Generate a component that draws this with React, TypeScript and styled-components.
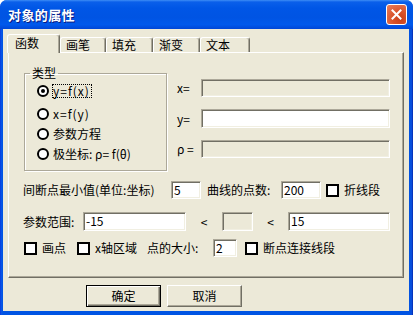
import React from "react";
import styled, { createGlobalStyle } from "styled-components";

const Global = createGlobalStyle`
  html, body { margin: 0; padding: 0; background: #ffffff; }
  body { font-family: "Noto Sans CJK SC", "Noto Sans", sans-serif; font-size: 12px; color: #000; }
  * { box-sizing: border-box; }
`;

const FONT = `"Noto Sans CJK SC", "Noto Sans", sans-serif`;

const Window = styled.div`
  width: 413px;
  height: 315px;
  display: flex;
  flex-direction: column;
  background: linear-gradient(to right, #0831d9 0, #0a56e8 1px, #0054e3 3px, #0054e3 calc(100% - 4px), #0a4bd8 calc(100% - 1px), #001ea0 100%);
  border-radius: 7px 7px 0 0;
  overflow: hidden;
`;

const TitleBar = styled.div`
  height: 29px;
  flex: none;
  display: flex;
  align-items: center;
  justify-content: space-between;
  padding: 0 6px 0 8px;
  background: linear-gradient(#3d8df5 0, #0a5fea 2px, #0056e6 8px, #0054e3 60%, #0059ec 85%, #0046d6 100%);
`;

const Title = styled.div`
  font-family: ${FONT};
  font-weight: bold;
  font-size: 13px;
  line-height: 16px;
  color: #ffffff;
  text-shadow: 1px 1px 0 #0a1a80;
  letter-spacing: 0.4px;
`;

const CloseButton = styled.div`
  width: 21px;
  height: 21px;
  border: 1px solid #ffffff;
  border-radius: 3px;
  background: radial-gradient(circle at 70% 75%, #c8401a 0, #d9532a 40%, #e9805f 100%);
  display: flex;
  align-items: center;
  justify-content: center;
`;

const Body = styled.div`
  flex: 1;
  margin: 0 4px 4px 3px;
  background: #ece9d8;
  display: flex;
  flex-direction: column;
  padding: 5px 0 0 4px;
`;

const TabStrip = styled.div`
  display: flex;
  align-items: flex-end;
  height: 18px;
  position: relative;
  z-index: 1;
`;

const Tab = styled.div<{ $w: number; $active?: boolean }>`
  width: ${(p) => p.$w}px;
  height: ${(p) => (p.$active ? 19 : 15)}px;
  margin-bottom: ${(p) => (p.$active ? -1 : 0)}px;
  padding: ${(p) => (p.$active ? "1px 0 0 7px" : "0 0 0 5px")};
  background: #ece9d8;
  border-top: 1px solid #ffffff;
  border-left: 1px solid #ffffff;
  border-right: 1px solid #716f64;
  box-shadow: inset -1px 0 0 #aca899;
  border-radius: 3px 3px 0 0;
  font-family: ${FONT};
  font-size: 12px;
  line-height: 14px;
  white-space: nowrap;
`;

const Panel = styled.div`
  margin-left: 1px;
  width: 396px;
  height: 226px;
  flex: none;
  border-top: 1px solid #ffffff;
  border-left: 1px solid #ffffff;
  border-right: 1px solid #716f64;
  border-bottom: 1px solid #716f64;
  box-shadow: inset -1px -1px 0 #aca899;
  display: flex;
  flex-direction: column;
`;

const TopSection = styled.div`
  display: flex;
  align-items: flex-start;
  margin: 13px 0 0 15px;
`;

const Group = styled.fieldset`
  width: 143px;
  height: 105px;
  margin: 0;
  padding: 4px 0 0 5px;
  border: 1px solid #aca899;
  box-shadow: inset 1px 1px 0 #ffffff, 1px 1px 0 #ffffff;
  display: flex;
  flex-direction: column;
`;

const Legend = styled.legend`
  padding: 0 2px;
  margin-left: 0;
  font-family: ${FONT};
  font-size: 12px;
  line-height: 14px;
`;

const RadioRow = styled.div<{ $mb: number }>`
  display: flex;
  align-items: center;
  height: 14px;
  padding-left: 7px;
  margin-bottom: ${(p) => p.$mb}px;
  font-family: ${FONT};
  font-size: 12px;
  line-height: 14px;
  white-space: nowrap;
`;

const Radio = styled.span<{ $checked?: boolean }>`
  width: 12px;
  height: 12px;
  flex: none;
  border-radius: 50%;
  border: 2px solid #000000;
  background: #ffffff;
  margin-right: 3px;
  display: flex;
  align-items: center;
  justify-content: center;
  &::after {
    content: "";
    width: 4px;
    height: 4px;
    border-radius: 50%;
    background: ${(p) => (p.$checked ? "#000000" : "transparent")};
  }
`;

const RadioText = styled.span<{ $focus?: boolean; $wide?: boolean }>`
  border: 1px dotted ${(p) => (p.$focus ? "#000000" : "transparent")};
  padding: 0 1px 0 0;
  line-height: 12px;
  letter-spacing: ${(p) => (p.$wide ? "1px" : "0")};
`;

const Fields = styled.div`
  display: grid;
  grid-template-columns: 24px 189px;
  grid-template-rows: 18px 19px 18px;
  row-gap: 12px;
  margin: 13px 0 0 10px;
  align-items: center;
`;

const FieldLabel = styled.span`
  font-family: ${FONT};
  font-size: 12px;
  line-height: 14px;
  white-space: nowrap;
`;

const Input = styled.div<{ $w?: number; $disabled?: boolean }>`
  width: ${(p) => (p.$w ? `${p.$w}px` : "100%")};
  height: 100%;
  flex: none;
  background: ${(p) => (p.$disabled ? "#ece9d8" : "#ffffff")};
  border-top: 1px solid #aca899;
  border-left: 1px solid #aca899;
  border-right: 1px solid #ffffff;
  border-bottom: 1px solid #ffffff;
  box-shadow: inset 1px 1px 0 #716f64, inset -1px -1px 0 #f1efe2;
  padding: 0 0 0 2px;
  font-family: ${FONT};
  font-size: 12px;
  line-height: 16px;
  white-space: nowrap;
`;

const Rows = styled.div`
  display: flex;
  flex-direction: column;
  padding-left: 14px;
`;

const Row = styled.div<{ $mt: number; $h: number }>`
  display: flex;
  align-items: center;
  height: ${(p) => p.$h}px;
  margin-top: ${(p) => p.$mt}px;
`;

const Cell = styled.span<{ $w?: number; $ml?: number; $center?: boolean }>`
  ${(p) => (p.$w ? `width: ${p.$w}px; flex: none;` : "")}
  margin-left: ${(p) => p.$ml ?? 0}px;
  text-align: ${(p) => (p.$center ? "center" : "left")};
  font-family: ${FONT};
  font-size: 12px;
  line-height: 14px;
  white-space: nowrap;
`;

const Check = styled.span`
  width: 13px;
  height: 13px;
  flex: none;
  border: 2px solid #000000;
  background: #ffffff;
`;

const CheckItem = styled.span<{ $w?: number; $ml?: number }>`
  display: flex;
  align-items: center;
  gap: 5px;
  ${(p) => (p.$w ? `width: ${p.$w}px; flex: none;` : "")}
  margin-left: ${(p) => p.$ml ?? 0}px;
  font-family: ${FONT};
  font-size: 12px;
  line-height: 14px;
  white-space: nowrap;
`;

const ButtonRow = styled.div`
  display: flex;
  gap: 6px;
  margin: 7px 0 0 79px;
`;

const Button = styled.div<{ $default?: boolean }>`
  width: 75px;
  height: 22px;
  display: flex;
  align-items: center;
  justify-content: center;
  background: #ece9d8;
  font-family: ${FONT};
  font-size: 12px;
  line-height: 14px;
  ${(p) =>
    p.$default
      ? `border: 1px solid #000000;
         box-shadow: inset 1px 1px 0 #ffffff, inset -1px -1px 0 #716f64, inset -2px -2px 0 #aca899;`
      : `border-top: 1px solid #ffffff;
         border-left: 1px solid #ffffff;
         border-right: 1px solid #716f64;
         border-bottom: 1px solid #716f64;
         box-shadow: inset -1px -1px 0 #aca899;`}
`;

const tabs = [
  { label: "函数", w: 53 },
  { label: "画笔", w: 46 },
  { label: "填充", w: 47 },
  { label: "渐变", w: 47 },
  { label: "文本", w: 50 },
];

export default function App() {
  return (
    <>
      <Global />
      <Window>
        <TitleBar>
          <Title>对象的属性</Title>
          <CloseButton>
            <svg width="11" height="11" viewBox="0 0 11 11">
              <path d="M1.5 1.5 L9.5 9.5 M9.5 1.5 L1.5 9.5" stroke="#ffffff" strokeWidth="2" strokeLinecap="square" />
            </svg>
          </CloseButton>
        </TitleBar>
        <Body>
          <TabStrip>
            {tabs.map((t, i) => (
              <Tab key={t.label} $w={t.w} $active={i === 0}>
                {t.label}
              </Tab>
            ))}
          </TabStrip>
          <Panel>
            <TopSection>
              <Group>
                <Legend>类型</Legend>
                <RadioRow $mb={9}>
                  <Radio $checked />
                  <RadioText $focus $wide>y=f(x)</RadioText>
                </RadioRow>
                <RadioRow $mb={6}>
                  <Radio />
                  <RadioText $wide>x=f(y)</RadioText>
                </RadioRow>
                <RadioRow $mb={6}>
                  <Radio />
                  <RadioText>参数方程</RadioText>
                </RadioRow>
                <RadioRow $mb={0}>
                  <Radio />
                  <RadioText>极坐标: ρ= f(θ)</RadioText>
                </RadioRow>
              </Group>
              <Fields>
                <FieldLabel>x=</FieldLabel>
                <Input $disabled />
                <FieldLabel>y=</FieldLabel>
                <Input />
                <FieldLabel>ρ =</FieldLabel>
                <Input $disabled />
              </Fields>
            </TopSection>
            <Rows>
              <Row $mt={10} $h={18}>
                <Cell $w={148}>间断点最小值(单位:坐标)</Cell>
                <Input $w={30}>5</Input>
                <Cell $w={74} $ml={6}>曲线的点数:</Cell>
                <Input $w={40}>200</Input>
                <CheckItem $ml={5}>
                  <Check />
                  折线段
                </CheckItem>
              </Row>
              <Row $mt={13} $h={19}>
                <Cell $w={60}>参数范围:</Cell>
                <Input $w={103}>-15</Input>
                <Cell $w={36} $center>&lt;</Cell>
                <Input $w={31} $disabled />
                <Cell $w={35} $center>&lt;</Cell>
                <Input $w={102}>15</Input>
              </Row>
              <Row $mt={8} $h={18}>
                <CheckItem $w={53} $ml={1}>
                  <Check />
                  画点
                </CheckItem>
                <CheckItem $w={70}>
                  <Check />
                  x轴区域
                </CheckItem>
                <Cell $w={66}>点的大小:</Cell>
                <Input $w={24}>2</Input>
                <CheckItem $ml={8}>
                  <Check />
                  断点连接线段
                </CheckItem>
              </Row>
            </Rows>
          </Panel>
          <ButtonRow>
            <Button $default>确定</Button>
            <Button>取消</Button>
          </ButtonRow>
        </Body>
      </Window>
    </>
  );
}
